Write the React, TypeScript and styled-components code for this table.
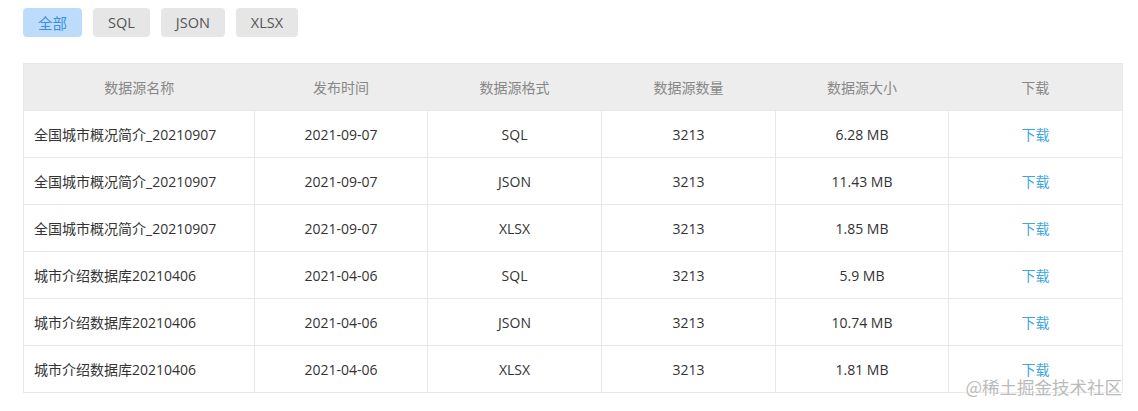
import React, { useState } from "react"
import styled, { createGlobalStyle } from "styled-components"

const font = "'Open Sans', 'Noto Sans CJK SC', sans-serif"

const GlobalStyle = createGlobalStyle`
  body {
    margin: 0;
    background: #fff;
    font-family: ${font};
  }
`

const Page = styled.div`
  position: relative;
  width: 1138px;
  height: 411px;
  padding: 8px 16px 0 23px;
  box-sizing: border-box;
`

const Tabs = styled.div`
  display: flex;
  gap: 11px;
  margin-bottom: 26px;
`

const Tab = styled.button<{ $active?: boolean }>`
  height: 29px;
  padding: 0 15px;
  border: none;
  border-radius: 4px;
  font-family: ${font};
  font-size: 14.5px;
  cursor: pointer;
  background: ${p => (p.$active ? "#bddcfb" : "#e6e6e6")};
  color: ${p => (p.$active ? "#3a8ee6" : "#555")};
`

const Table = styled.table`
  width: 1099px;
  border-collapse: collapse;
  table-layout: fixed;
  font-size: 14px;
  border: 1px solid #e8e8e8;
`

const Th = styled.th`
  height: 46px;
  padding: 0;
  background: #eeeded;
  color: #888;
  font-weight: normal;
  text-align: center;
`

const Td = styled.td<{ $left?: boolean }>`
  height: 46px;
  padding: 0 0 0 ${p => (p.$left ? "10px" : "0")};
  border: 1px solid #e8e8e8;
  color: #333;
  text-align: ${p => (p.$left ? "left" : "center")};
`

const DownloadLink = styled.a`
  color: #3ea6e0;
  text-decoration: none;
  cursor: pointer;
`

const Watermark = styled.div`
  position: absolute;
  right: 16px;
  bottom: 14px;
  font-family: 'Noto Sans CJK SC', sans-serif;
  font-size: 17.5px;
  line-height: 20px;
  color: #bbb;
  text-shadow: 0 0 2px #fff, 0 0 2px #fff;
  pointer-events: none;
`

const rows = [
  ["全国城市概况简介_20210907", "2021-09-07", "SQL", "3213", "6.28 MB"],
  ["全国城市概况简介_20210907", "2021-09-07", "JSON", "3213", "11.43 MB"],
  ["全国城市概况简介_20210907", "2021-09-07", "XLSX", "3213", "1.85 MB"],
  ["城市介绍数据库20210406", "2021-04-06", "SQL", "3213", "5.9 MB"],
  ["城市介绍数据库20210406", "2021-04-06", "JSON", "3213", "10.74 MB"],
  ["城市介绍数据库20210406", "2021-04-06", "XLSX", "3213", "1.81 MB"],
]

const tabs = ["全部", "SQL", "JSON", "XLSX"]
const widths = [231, 173, 174, 174, 173, 174]
const headers = ["数据源名称", "发布时间", "数据源格式", "数据源数量", "数据源大小", "下载"]

export default function App() {
  const [active, setActive] = useState("全部")
  const shown = active === "全部" ? rows : rows.filter(r => r[2] === active)

  return (
    <Page>
      <GlobalStyle />
      <Tabs>
        {tabs.map(t => (
          <Tab key={t} $active={t === active} onClick={() => setActive(t)}>
            {t}
          </Tab>
        ))}
      </Tabs>
      <Table>
        <colgroup>
          {widths.map((w, i) => (
            <col key={i} style={{ width: w }} />
          ))}
        </colgroup>
        <thead>
          <tr>
            {headers.map(h => (
              <Th key={h}>{h}</Th>
            ))}
          </tr>
        </thead>
        <tbody>
          {shown.map((r, i) => (
            <tr key={i}>
              <Td $left>{r[0]}</Td>
              <Td>{r[1]}</Td>
              <Td>{r[2]}</Td>
              <Td>{r[3]}</Td>
              <Td>{r[4]}</Td>
              <Td>
                <DownloadLink>下载</DownloadLink>
              </Td>
            </tr>
          ))}
        </tbody>
      </Table>
      <Watermark>@稀土掘金技术社区</Watermark>
    </Page>
  )
}
